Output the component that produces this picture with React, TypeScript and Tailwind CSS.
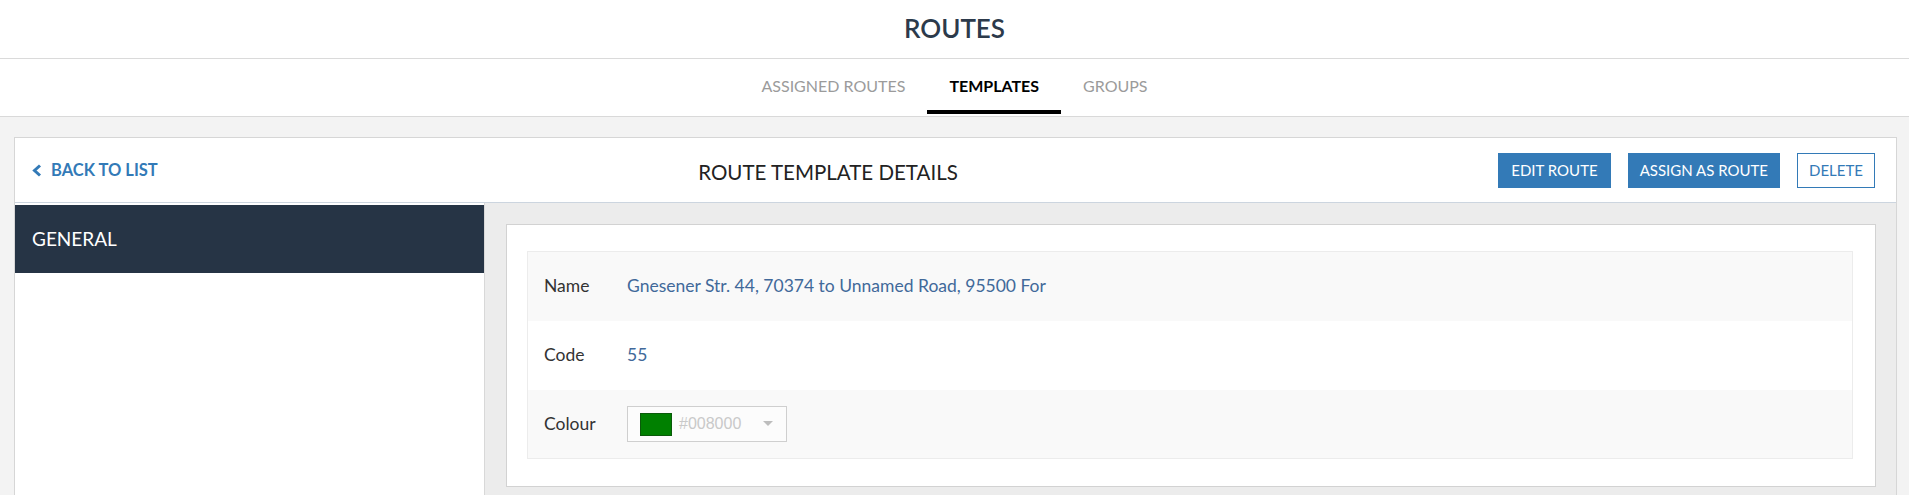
import React from 'react';

const tabs = [
  { label: 'ASSIGNED ROUTES', active: false },
  { label: 'TEMPLATES', active: true },
  { label: 'GROUPS', active: false },
];

const rows = [
  { label: 'Name', value: 'Gnesener Str. 44, 70374 to Unnamed Road, 95500 For' },
  { label: 'Code', value: '55' },
];

function ColourPicker() {
  return (
    <div className="flex items-center w-[160px] h-[36px] border border-[#cfcfcf] bg-[#fcfcfc] pl-[12px]">
      <span className="w-[32px] h-[23px] bg-[#008000] border border-[#0a5a0a]" />
      <span className="ml-[7px] text-[16px] text-[#c9c9c9] font-['Liberation_Sans',_Arial,_sans-serif]">#008000</span>
      <svg width="10" height="6" viewBox="0 0 10 6" className="ml-[22px]">
        <polygon points="0,0 10,0 5,5" fill="#bdbdbd" />
      </svg>
    </div>
  );
}

export default function App() {
  return (
    <div className="min-h-screen bg-[#f3f3f3] font-['Lato',_'Noto_Sans',_sans-serif]">
      <div className="h-[59px] bg-white border-b border-[#dadada] flex items-center justify-center">
        <h1 className="text-[26px] font-semibold text-[#2c3a4b] leading-none -mt-[3px]">ROUTES</h1>
      </div>

      <div className="h-[58px] bg-white border-b border-[#d9d9d9] flex justify-center">
        {tabs.map((t) => (
          <div key={t.label} className="relative h-full px-[22px] pt-[15px]">
            <span
              className={
                'text-[16px] leading-[20px] ' +
                (t.active ? 'text-black font-bold' : 'text-[#9b9b9b]')
              }
            >
              {t.label}
            </span>
            {t.active && <div className="absolute left-0 right-0 bottom-[2px] h-[4px] bg-black" />}
          </div>
        ))}
      </div>

      <div className="mt-[20px] ml-[14px] mr-[12px] border border-[#d6d6d6] bg-white">
        <div className="h-[65px] flex items-center border-b border-[#ccd5df] pl-[17px] pr-[21px]">
          <a className="flex items-center text-[#337ab7] font-bold text-[16.5px] gap-[9px]" href="#">
            <svg width="10" height="13" viewBox="0 0 10 13">
              <polyline points="8,1.5 2.5,6.5 8,11.5" fill="none" stroke="#337ab7" strokeWidth="3" />
            </svg>
            BACK TO LIST
          </a>
          <div className="flex-1 text-center text-[20.5px] text-[#222] pt-[5px]">
            ROUTE TEMPLATE DETAILS
          </div>
          <div className="flex items-center gap-[17px]">
            <button className="h-[35px] px-[13px] bg-[#337ab7] text-white text-[15px]">EDIT ROUTE</button>
            <button className="h-[35px] px-[12px] bg-[#337ab7] text-white text-[15px]">ASSIGN AS ROUTE</button>
            <button className="h-[35px] px-[11px] border border-[#337ab7] text-[#337ab7] text-[15px] bg-white">
              DELETE
            </button>
          </div>
        </div>

        <div className="flex">
          <div className="w-[469px] pt-[2px] bg-white">
            <div className="h-[68px] bg-[#263445] flex items-center pl-[17px] text-white text-[19px]">GENERAL</div>
          </div>
          <div className="flex-1 bg-[#ececec] border-l border-[#d8d8d8] pl-[21px] pr-[20px] pt-[21px] pb-[21px]">
            <div className="bg-white border border-[#d2d2d2] pl-[20px] pr-[22px] pt-[26px] pb-[27px]">
              <div className="border border-[#ececec]">
                {rows.map((r, i) => (
                  <div
                    key={r.label}
                    className={'h-[69px] flex items-center ' + (i % 2 === 0 ? 'bg-[#f9f9f9]' : 'bg-white')}
                  >
                    <div className="w-[99px] pl-[16px] text-[17.5px] text-[#333]">{r.label}</div>
                    <div className="text-[17.5px] text-[#41699a]">{r.value}</div>
                  </div>
                ))}
                <div className="h-[68px] flex items-center bg-[#f9f9f9]">
                  <div className="w-[99px] pl-[16px] text-[17.5px] text-[#333]">Colour</div>
                  <ColourPicker />
                </div>
              </div>
            </div>
          </div>
        </div>
      </div>
    </div>
  );
}
